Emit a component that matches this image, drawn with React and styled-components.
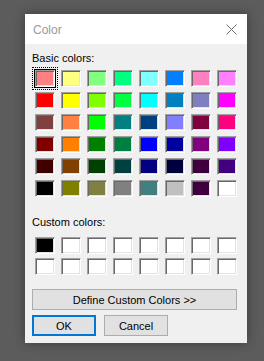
import React from "react";
import styled, { createGlobalStyle } from "styled-components";

const Global = createGlobalStyle`
  html, body { margin: 0; padding: 0; background: #5c5c5c; }
  body { font-family: "Liberation Sans", Arial, sans-serif; }
`;

const Page = styled.div`
  width: 264px;
  height: 361px;
  padding: 14px 0 0 25px;
  box-sizing: border-box;
`;

const Dialog = styled.div`
  width: 222px;
  height: 329px;
  background: #f0f0f0;
  box-shadow: 0 0 10px rgba(0, 0, 0, 0.35);
  display: flex;
  flex-direction: column;
`;

const TitleBar = styled.div`
  height: 30px;
  background: #ffffff;
  display: flex;
  align-items: center;
  justify-content: space-between;
  padding: 0 10px 0 8px;
`;

const Title = styled.span`
  font-size: 12px;
  color: #9a9a9a;
  margin-top: 1px;
`;

const Body = styled.div`
  display: flex;
  flex-direction: column;
  padding: 7px 10px 0 7px;
`;

const Label = styled.div`
  font-size: 11px;
  line-height: 15px;
  height: 15px;
  color: #000;
  margin-top: ${(p) => p.$mt || 0}px;
`;

const Grid = styled.div`
  display: grid;
  grid-template-columns: repeat(8, 20px);
  grid-auto-rows: 17px;
  column-gap: 6px;
  row-gap: ${(p) => p.$rowGap}px;
  margin-top: ${(p) => p.$mt}px;
  margin-left: 3px;
`;

const Swatch = styled.div`
  position: relative;
  box-sizing: border-box;
  background: ${(p) => p.$c};
  border-style: solid;
  border-width: 1px;
  border-color: #a0a0a0 #ffffff #ffffff #a0a0a0;
  box-shadow: inset 1px 1px 0 #696969, inset -1px -1px 0 #e3e3e3;

  ${(p) =>
    p.$selected &&
    `
    &::before {
      content: "";
      position: absolute;
      inset: -2px;
      border: 1px solid #000;
    }
    &::after {
      content: "";
      position: absolute;
      inset: -4px;
      border: 1px dotted #000;
    }
  `}
`;

const WideButton = styled.button`
  margin-top: 14px;
  margin-left: 0;
  width: 205px;
  height: 21px;
  box-sizing: border-box;
  background: #e1e1e1;
  border: 1px solid #adadad;
  font-family: "Liberation Sans", Arial, sans-serif;
  font-size: 11px;
  color: #000;
  padding: 0;
`;

const ButtonRow = styled.div`
  display: flex;
  gap: 8px;
  margin-top: 5px;
`;

const Button = styled.button`
  width: 64px;
  height: 21px;
  box-sizing: border-box;
  background: #e1e1e1;
  border: ${(p) => (p.$default ? "2px solid #0078d7" : "1px solid #adadad")};
  font-family: "Liberation Sans", Arial, sans-serif;
  font-size: 11px;
  color: #000;
  padding: 0;
`;

const CloseIcon = () => (
  <svg width="11" height="11" viewBox="0 0 11 11">
    <path d="M0.5 0.5 L10.5 10.5 M10.5 0.5 L0.5 10.5" stroke="#6f6f6f" strokeWidth="1" fill="none" />
  </svg>
);

const basic = [
  "#FF8080", "#FFFF80", "#80FF80", "#00FF80", "#80FFFF", "#0080FF", "#FF80C0", "#FF80FF",
  "#FF0000", "#FFFF00", "#80FF00", "#00FF40", "#00FFFF", "#0080C0", "#8080C0", "#FF00FF",
  "#804040", "#FF8040", "#00FF00", "#008080", "#004080", "#8080FF", "#800040", "#FF0080",
  "#800000", "#FF8000", "#008000", "#008040", "#0000FF", "#0000A0", "#800080", "#8000FF",
  "#400000", "#804000", "#004000", "#004040", "#000080", "#000040", "#400040", "#400080",
  "#000000", "#808000", "#808040", "#808080", "#408080", "#C0C0C0", "#400040", "#FFFFFF",
];

const custom = ["#000000", ...Array(15).fill("#FFFFFF")];

export default function App() {
  return (
    <>
      <Global />
      <Page>
        <Dialog>
          <TitleBar>
            <Title>Color</Title>
            <CloseIcon />
          </TitleBar>
          <Body>
            <Label>Basic colors:</Label>
            <Grid $rowGap={5} $mt={4}>
              {basic.map((c, i) => (
                <Swatch key={i} $c={c} $selected={i === 0} />
              ))}
            </Grid>
            <Label $mt={18}>Custom colors:</Label>
            <Grid $rowGap={4} $mt={7}>
              {custom.map((c, i) => (
                <Swatch key={i} $c={c} />
              ))}
            </Grid>
            <WideButton>Define Custom Colors &gt;&gt;</WideButton>
            <ButtonRow>
              <Button $default>OK</Button>
              <Button>Cancel</Button>
            </ButtonRow>
          </Body>
        </Dialog>
      </Page>
    </>
  );
}
